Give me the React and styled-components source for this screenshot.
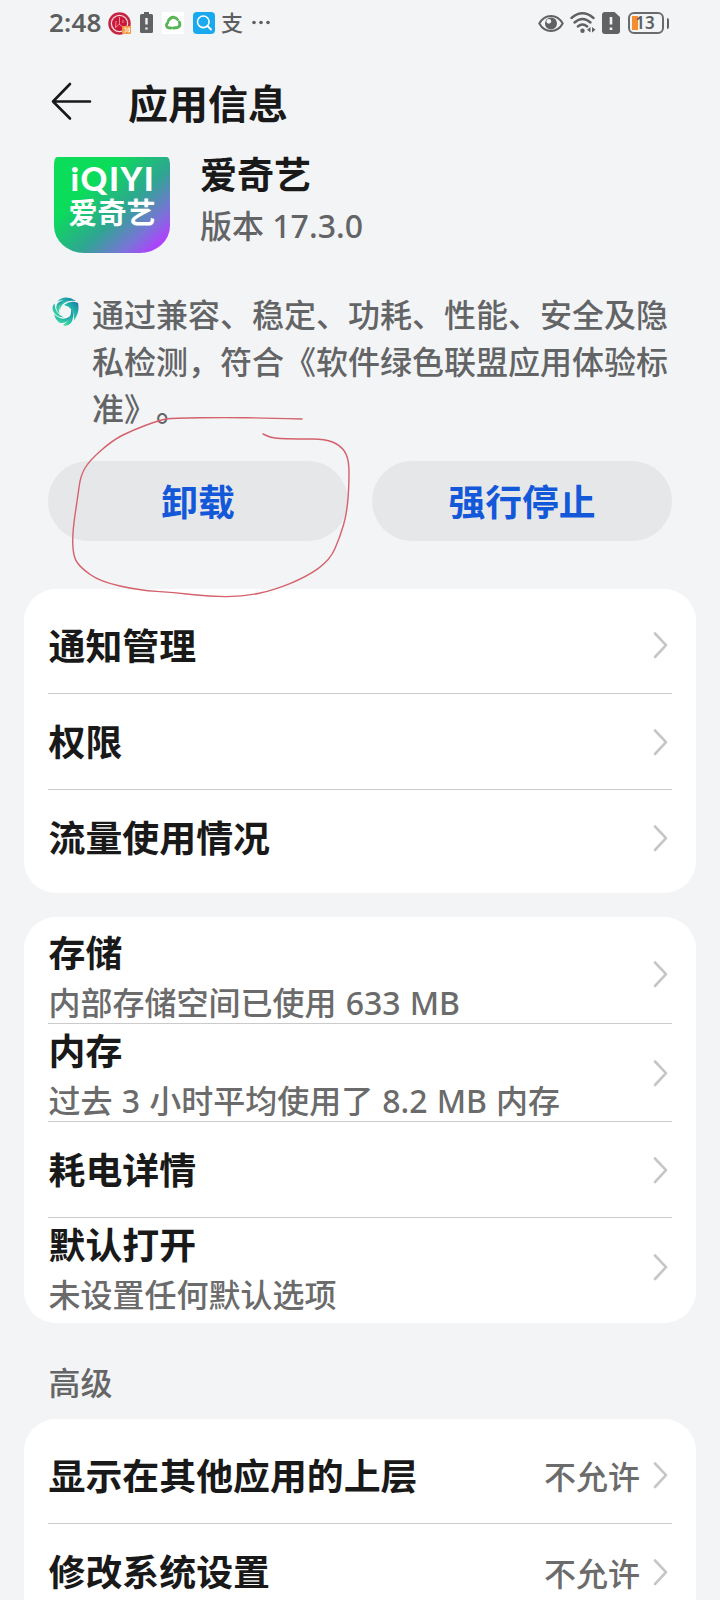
import React from 'react';
import styled, { createGlobalStyle } from 'styled-components';

const GlobalStyle = createGlobalStyle`
  * { box-sizing: border-box; }
  html, body { margin: 0; padding: 0; background: #f3f4f6; }
  body {
    font-family: "Noto Sans", "Noto Sans CJK SC", sans-serif;
    text-spacing-trim: space-all;
  }
`;

const Screen = styled.div`
  position: relative;
  width: 720px;
  height: 1600px;
  overflow: hidden;
  background: #f3f4f6;
  color: #191919;
  display: flex;
  flex-direction: column;
`;

const StatusBar = styled.header`
  height: 46px;
  flex: none;
  padding: 0 51px 0 49px;
  display: flex;
  align-items: center;
  justify-content: space-between;
  color: #5d5e60;
`;

const StatusGroup = styled.div`
  display: flex;
  align-items: center;
  gap: ${(p) => p.$gap}px;
`;

const Clock = styled.span`
  width: 54px;
  font-size: 26px;
  font-weight: 600;
  line-height: 44px;
  margin-bottom: 2px;
  letter-spacing: 0.2px;
`;

const PayGlyph = styled.span`
  width: 22px;
  font-size: 22px;
  font-weight: 500;
  line-height: 44px;
  margin-bottom: 2px;
`;

const TitleBar = styled.div`
  height: 111px;
  flex: none;
  padding: 0 0 0 50px;
  display: flex;
  align-items: center;
  gap: 35px;
`;

const PageTitle = styled.h1`
  margin: 5px 0 0;
  font-size: 40px;
  font-weight: 700;
  line-height: 60px;
`;

const AppHeader = styled.section`
  height: 130px;
  flex: none;
  padding-left: 54px;
  display: flex;
  gap: 30px;
`;

const AppLogo = styled.div`
  width: 116px;
  height: 96px;
  border-radius: 3px 3px 30px 30px / 8px 8px 27px 27px;
  background: linear-gradient(137deg, #0bdc5a 0%, #0bdc5a 30%, #2fa592 58%, #7a73d8 78%, #b33dff 92%);
  color: #fff;
  display: flex;
  flex-direction: column;
  align-items: center;
`;

const LogoLatin = styled.span`
  margin: 2px -2px 0 0;
  font-family: Lato, sans-serif;
  font-size: 33px;
  font-weight: 900;
  line-height: 38px;
  letter-spacing: 1.6px;
`;

const LogoHan = styled.span`
  font-size: 29px;
  font-weight: 700;
  line-height: 32px;
`;

const AppName = styled.h2`
  margin: -8px 0 0;
  font-size: 37px;
  font-weight: 700;
  line-height: 52px;
`;

const AppVersion = styled.div`
  font-size: 32px;
  font-weight: 500;
  line-height: 49px;
  color: #636466;
`;

const Certificate = styled.section`
  flex: none;
  height: 174px;
  padding: 4px 0 0 52px;
  display: flex;
  gap: 13px;

  > svg {
    margin-top: 6px;
  }
`;

const CertificateText = styled.p`
  margin: 0;
  width: 578px;
  font-size: 32px;
  font-weight: 500;
  line-height: 47px;
  color: #636466;
`;

const Actions = styled.div`
  flex: none;
  padding: 0 48px;
  display: grid;
  grid-template-columns: 1fr 1fr;
  gap: 24px;
`;

const ActionButton = styled.button`
  height: 80px;
  padding: 3px 0 0;
  border: 0;
  border-radius: 40px;
  background: #e6e7e9;
  color: #1458da;
  font-family: inherit;
  font-size: 36.8px;
  font-weight: 700;
  line-height: 77px;
`;

const Card = styled.section`
  flex: none;
  margin: ${(p) => p.$top}px 24px 0;
  padding: 8px 24px;
  border-radius: 32px;
  background: #fff;
`;

const Row = styled.div`
  height: ${(p) => p.$height}px;
  border-bottom: ${(p) => (p.$last ? '0' : '1px solid #cbcbcc')};
  padding-right: 4px;
  display: flex;
  align-items: center;
`;

const RowLabels = styled.div`
  flex: 1;
  padding-left: 0.6px;
  margin-top: ${(p) => p.$shift}px;
`;

const RowTitle = styled.div`
  font-size: 36.9px;
  font-weight: 700;
  line-height: 52px;
`;

const RowDetail = styled.div`
  font-size: 32px;
  font-weight: 500;
  line-height: 47px;
  margin-bottom: -3px;
  word-spacing: 0.8px;
  color: #6b6b6b;
`;

const RowValue = styled.span`
  margin: 0 13px 0 0;
  font-size: 32px;
  font-weight: 500;
  color: #6b6b6b;
`;

const SectionLabel = styled.div`
  flex: none;
  height: 96px;
  padding: 36px 48.6px 0;
  font-size: 32px;
  font-weight: 500;
  line-height: 48px;
  color: #666;
`;

const Annotation = styled.svg`
  position: absolute;
  inset: 0;
  pointer-events: none;
`;

const Chevron = () => (
  <svg width="15" height="28" viewBox="0 0 15 28" fill="none" stroke="#c6c6c7" strokeWidth="2.6" strokeLinecap="round" strokeLinejoin="round">
    <path d="M2 2.5 L13 14.2 L2 26" />
  </svg>
);

const BackArrow = () => (
  <svg width="43" height="40" viewBox="0 0 43 40" fill="none" stroke="#191919" strokeWidth="2.6" strokeLinecap="round" strokeLinejoin="round">
    <path d="M20 2 L3 19.5 L20 36.5 M3 19.5 H40" />
  </svg>
);

const NetworkIcon = () => (
  <svg width="23" height="23" viewBox="0 0 23 23">
    <circle cx="11.5" cy="11.5" r="10" fill="#f4d6dc" stroke="#c52542" strokeWidth="2.5" />
    <circle cx="11.5" cy="11.5" r="7.5" fill="#cb1837" />
    <path d="M11.5 5 V12 M8 9 L7.5 15 M11.5 12 L7 16 M11 12 L15 15 M15 8 V11" stroke="#ed8fa1" strokeWidth="1" fill="none" />
    <rect x="14" y="14" width="9" height="8" rx="1" fill="#f39a43" />
    <path d="M16 16 h2 v4 h-2 M20 16 h1.5 v4 H20z" stroke="#fff" strokeWidth=".8" fill="none" />
  </svg>
);

const BatteryAlertIcon = () => (
  <svg width="13" height="22" viewBox="0 0 13 22">
    <path d="M4 0 h5 v2 h2.5 Q13 2 13 3.5 V19.5 Q13 21 11.5 21 H1.5 Q0 21 0 19.5 V3.5 Q0 2 1.5 2 H4z" fill="#616264" />
    <path d="M6.5 6 V12.5 M6.5 15.5 V17.5" stroke="#f3f4f6" strokeWidth="2.4" />
  </svg>
);

const RecycleIcon = () => (
  <svg width="22" height="22" viewBox="0 0 22 22">
    <rect width="22" height="22" fill="#fff" />
    <g fill="none" stroke="#59b458" strokeWidth="2.9" strokeLinecap="round">
      <path d="M6.5 8.5 Q8.5 5 11.5 5.2 Q14 5.5 15.5 7.5" />
      <path d="M17.3 10 Q19 14 15.5 15.5 L11.5 16" />
      <path d="M9 16 Q3.5 16 4.6 12.3 L5.8 10.5" />
    </g>
  </svg>
);

const SearchAppIcon = () => (
  <svg width="22" height="22" viewBox="0 0 22 22">
    <rect width="22" height="22" rx="4" fill="#19a9ee" />
    <circle cx="10.3" cy="9.8" r="5.8" fill="none" stroke="#fff" strokeWidth="1.6" />
    <path d="M14.5 14 L18 17.5" stroke="#fff" strokeWidth="1.8" strokeLinecap="round" />
  </svg>
);

const MoreIcon = () => (
  <svg width="18" height="6" viewBox="0 0 18 6" fill="#5d5e60">
    <circle cx="2" cy="2.5" r="1.8" />
    <circle cx="9" cy="2.5" r="1.8" />
    <circle cx="16" cy="2.5" r="1.8" />
  </svg>
);

const EyeIcon = () => (
  <svg width="26" height="19" viewBox="0 0 26 19">
    <path d="M1.3 9.5 C7 -.5 19 -.5 24.7 9.5 C19 19.5 7 19.5 1.3 9.5z" fill="none" stroke="#606163" strokeWidth="2" />
    <circle cx="13" cy="9.5" r="6" fill="#606163" />
    <circle cx="10.8" cy="7.3" r="2.4" fill="#f3f4f6" />
  </svg>
);

const WifiIcon = () => (
  <svg width="26" height="22" viewBox="0 0 26 22">
    <g fill="none" stroke="#606163" strokeWidth="2.4" strokeLinecap="round">
      <path d="M1.5 6 Q12.5 -3.5 23.5 6" />
      <path d="M4.5 10.5 Q12.5 3.5 20.5 10.5" />
      <path d="M7.8 14.5 Q12.5 10.5 17.2 14.5" />
    </g>
    <circle cx="12.5" cy="18.8" r="2.2" fill="#606163" />
    <path d="M20.5 15 V20.5 L17 17.8z M22 15 V20.5 L25.5 17.8z" fill="#606163" />
  </svg>
);

const SimAlertIcon = () => (
  <svg width="18" height="22" viewBox="0 0 18 22">
    <path d="M3 0 H12.5 L18 5 V19 Q18 22 15 22 H3 Q0 22 0 19 V3 Q0 0 3 0z" fill="#616264" />
    <path d="M9 5 V12.5 M9 15.5 V18" stroke="#f3f4f6" strokeWidth="2.6" />
  </svg>
);

const BatteryBox = styled.div`
  width: 36px;
  height: 22px;
  margin-left: 2px;
  padding-right: 1px;
  border: 2px solid #6a6b6d;
  border-radius: 6px;
  background: linear-gradient(90deg, transparent 2px, #f58d2e 2px, #f58d2e 8px, transparent 8px) no-repeat 0 2px / 100% 14px;
  font-size: 17px;
  font-weight: 600;
  line-height: 17px;
  text-align: center;
`;

const BatteryNub = styled.div`
  width: 2.5px;
  height: 11px;
  margin-left: -3px;
  border-radius: 0 2px 2px 0;
  background: #606163;
`;

const AllianceIcon = () => (
  <svg width="27" height="30" viewBox="0 0 27 30">
    <defs>
      <linearGradient id="swirl" x1="1" y1="0" x2="0.2" y2="1">
        <stop offset="0" stopColor="#1672a8" />
        <stop offset=".45" stopColor="#22b3a9" />
        <stop offset="1" stopColor="#43dfa0" />
      </linearGradient>
    </defs>
    <g fill="url(#swirl)">
      <path d="M5 4.5 Q13 -3 24 4 Q15 2.5 10.5 7.5 Q7.5 11 8 14 Q5.5 8 11 3.5 Q8 3 5 4.5z" />
      <path d="M12 8 Q19 2.5 26 6 Q28 15 22 23.5 Q23 10.5 12 8z" />
      <path d="M19.5 11.5 Q23 20 19 26 Q15 30 11 28 Q19 23 19.5 11.5z" />
      <path d="M18.5 19 Q15 28 7 25.5 Q3 22 2 17.5 Q11 25 18.5 19z" />
      <path d="M12 20.5 Q4 20.5 1 14 Q-.5 9 2.5 6.5 Q2.5 16 12 20.5z" />
      <path d="M7.5 17 Q1.5 11 6 5.8 Q8.5 4 11 4 Q5 9 7.5 17z" />
    </g>
  </svg>
);

const strokePoints = [
  [302, 419], [265, 418], [227, 417.5], [173, 418], [160, 420], [133, 430], [113, 440],
  [90, 460], [80.7, 475], [77.7, 497], [72.3, 533], [73.3, 557], [81, 568], [100, 581.5],
  [140, 590.5], [173, 592.3], [210, 596.7], [243, 596.5], [273, 590.5], [306.7, 576.7],
  [330, 560], [340, 537], [347, 513], [349.3, 480], [348.5, 457], [340, 445], [325, 439],
  [300, 439], [273, 438.5], [263, 434],
];

// Smooths the hand-drawn stroke by curving through segment midpoints.
const smooth = (pts) => {
  let d = `M${pts[0].join(' ')}`;
  for (let i = 1; i < pts.length - 1; i += 1) {
    const [x, y] = pts[i];
    const [nx, ny] = pts[i + 1];
    d += ` Q${x} ${y} ${(x + nx) / 2} ${(y + ny) / 2}`;
  }
  return `${d} L${pts[pts.length - 1].join(' ')}`;
};

const Item = ({ title, detail, value, height = 97, last = false, shift = 1 }) => (
  <Row $height={height} $last={last}>
    <RowLabels $shift={shift}>
      <RowTitle>{title}</RowTitle>
      {detail && <RowDetail>{detail}</RowDetail>}
    </RowLabels>
    {value && <RowValue>{value}</RowValue>}
    <Chevron />
  </Row>
);

export default function App() {
  return (
    <Screen>
      <GlobalStyle />
      <StatusBar>
        <StatusGroup $gap={5}>
          <Clock>2:48</Clock>
          <StatusGroup $gap={9}>
            <NetworkIcon />
            <BatteryAlertIcon />
            <RecycleIcon />
            <StatusGroup $gap={6}>
              <SearchAppIcon />
              <PayGlyph>支</PayGlyph>
            </StatusGroup>
            <MoreIcon />
          </StatusGroup>
        </StatusGroup>
        <StatusGroup $gap={6}>
          <EyeIcon />
          <WifiIcon />
          <SimAlertIcon />
          <BatteryBox>13</BatteryBox>
          <BatteryNub />
        </StatusGroup>
      </StatusBar>

      <TitleBar>
        <BackArrow />
        <PageTitle>应用信息</PageTitle>
      </TitleBar>

      <AppHeader>
        <AppLogo>
          <LogoLatin>iQIYI</LogoLatin>
          <LogoHan>爱奇艺</LogoHan>
        </AppLogo>
        <div>
          <AppName>爱奇艺</AppName>
          <AppVersion>版本 17.3.0</AppVersion>
        </div>
      </AppHeader>

      <Certificate>
        <AllianceIcon />
        <CertificateText>
          通过兼容、稳定、功耗、性能、安全及隐私检测，符合《软件绿色联盟应用体验标准》。
        </CertificateText>
      </Certificate>

      <Actions>
        <ActionButton>卸载</ActionButton>
        <ActionButton>强行停止</ActionButton>
      </Actions>

      <Card $top={48}>
        <Item title="通知管理" />
        <Item title="权限" height={96} />
        <Item title="流量使用情况" height={95} last />
      </Card>

      <Card $top={24}>
        <Item title="存储" detail="内部存储空间已使用 633 MB" height={99} />
        <Item title="内存" detail="过去 3 小时平均使用了 8.2 MB 内存" height={98} />
        <Item title="耗电详情" height={96} />
        <Item title="默认打开" detail="未设置任何默认选项" height={97} last />
      </Card>

      <SectionLabel>高级</SectionLabel>

      <Card $top={0}>
        <Item title="显示在其他应用的上层" value="不允许" />
        <Item title="修改系统设置" value="不允许" height={96} />
      </Card>

      <Annotation width="720" height="1600" viewBox="0 0 720 1600" fill="none">
        <path d={smooth(strokePoints)} stroke="#d4616c" strokeWidth="1.4" strokeLinecap="round" />
      </Annotation>
    </Screen>
  );
}
